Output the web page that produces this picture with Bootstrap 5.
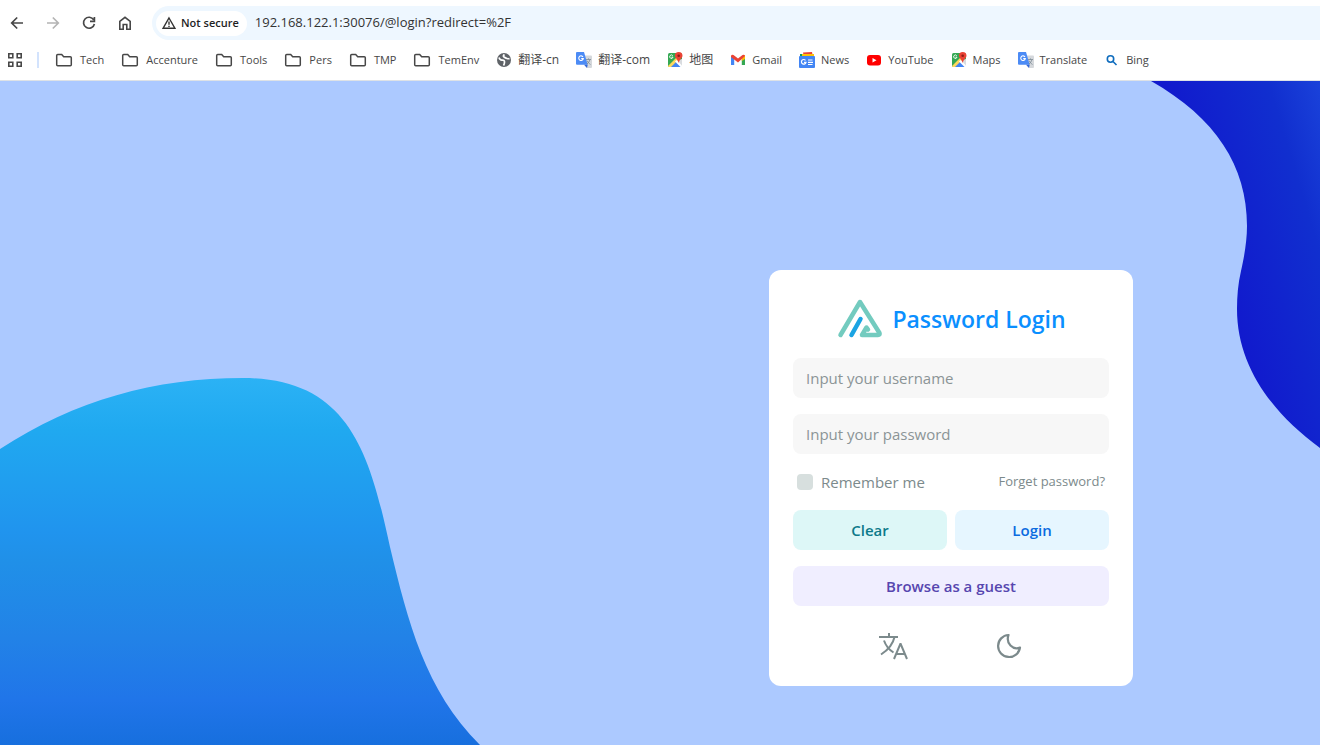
<!DOCTYPE html>
<html lang="en">
<head>
<meta charset="utf-8">
<meta name="viewport" content="width=device-width, initial-scale=1">
<title>Password Login</title>
<link rel="stylesheet" href="https://cdn.jsdelivr.net/npm/bootstrap@5.3.0/dist/css/bootstrap.min.css">
<style>
  body { font-family: "Open Sans", "Noto Sans CJK SC", sans-serif; background: #fff; }
  svg { display: block; flex: none; }
  button { color: inherit; }

  /* browser toolbar */
  .toolbar { height: 40px; padding: 6px 0 0 8px; gap: 18px; }
  .tool-btn { flex: none; width: 18px; height: 18px; padding: 0; border: 0; background: none; color: #474747; }
  .tool-btn:disabled { color: #b4b4b4; }
  .omnibox { height: 34px; padding-left: 4px; background: #eef7ff; border-radius: 17px 0 0 17px; }
  .secure-chip { height: 25px; padding: 0 8px 0 6px; gap: 5px; border: 0; border-radius: 13px; background: #fff; color: #1f1f1f; font-size: 11px; font-weight: 600; }
  .url-input { border: 0; background: none; outline: 0; color: #333; font-size: 13px; min-width: 0; }
  .bookmarks { height: 41px; padding-left: 7px; border-color: #dfe0e3; font-size: 11px; white-space: nowrap; overflow: hidden; }
  .bookmark-row { gap: 17px; }
  .bookmarks a { display: flex; align-items: center; gap: 6px; color: #474747; text-decoration: none; }
  .bookmarks a.folder-link { gap: 7px; }
  .bookmarks a:lang(zh) { font-size: 12px; }
  .divider { width: 2px; height: 16px; margin: 0 16px 0 14px; background: #d3e3fd; }

  /* login page */
  .page { background: #acc9ff; padding: 189px 187px 59px 24px; }
  .blob-left { left: 0; bottom: 0; }
  .blob-right { right: 0; top: 0; }
  .login-card { width: 364px; padding: 24px; border-radius: 12px; background: #fff; color: #7c8a8c; font-size: 15px; }
  .login-title { height: 48px; color: #0a8fff; font-size: 23px; font-weight: 600; }
  .field { height: 40px; padding: 0 13px; border: 0; border-radius: 8px; background: #f7f7f7; font-size: 15px; }
  .field::placeholder { color: #8b9496; }
  .tick { appearance: none; width: 16px; height: 16px; margin: 0; border-radius: 4px; background: #d7dfde; }
  .tick:checked { background: #0a8fff; }
  .options { height: 24px; }
  .forgot { color: #7c8a8c; font-size: 13px; text-decoration: none; }
  .action { height: 40px; border: 0; border-radius: 8px; font-size: 15px; font-weight: 600; }
  .action-clear { background: #ddf7f7; color: #0d7a8a; }
  .action-login { background: #e6f6ff; color: #0b6be0; }
  .action-guest { background: #f0eeff; color: #5746af; }
  .round-btn { border: 0; background: none; padding: 0; }
</style>
</head>
<body class="d-flex flex-column min-vh-100">

<svg width="0" height="0" class="position-absolute" aria-hidden="true">
  <symbol id="folder" viewBox="0 0 18 16"><path d="M2.700 2.500h4l2 2.200h6.600q1 0 1 1v7.100q0 1-1 1H2.700q-1 0-1-1V3.500q0-1 1-1z" fill="none" stroke="#474747" stroke-width="1.500"/></symbol>
  <symbol id="translate" viewBox="0 0 16 16">
    <path d="M6 3.500h9q1 0 1 1V15q0 1-1 1h-4z" fill="#d5d8dc"/>
    <path d="M1 0h7l3.700 12.700H1q-1 0-1-1V1q0-1 1-1z" fill="#4c8bf5"/>
    <path d="M8 12.700h3.700L11 16z" fill="#3367d6"/>
    <path d="M7 4.900A2.300 2.300 0 1 0 7.300 6.600H5.200" fill="none" stroke="#fff" stroke-width="1.100"/>
    <path d="M10 7.500h5M12.500 6.400v1.100M14 7.700q-1 3-3 4.300M11.200 8.800q1 2.500 3.300 3.700" fill="none" stroke="#7b8a94" stroke-width=".8"/>
  </symbol>
  <symbol id="maps" viewBox="0 0 16 16">
    <rect x="1" y="1" width="14" height="14" rx="1.500" fill="#34a853"/>
    <path d="M15 7v8L8.500 8.500z" fill="#d9dce0"/><path d="M3 15 9 9l6 6z" fill="#4285f4"/>
    <path d="M1 14 13 2l2 2L4 15H2q-1 0-1-1z" fill="#fdd85d"/><path d="M8 9.500 9.500 8l5.500 5.500V15h-1.500z" fill="#fff"/>
    <path d="M5.800 3.800A1.700 1.700 0 1 0 6 5.200H4.500" fill="none" stroke="#fff" stroke-width=".9"/>
    <path d="M11.700 0a3.800 3.800 0 0 1 3.800 3.800c0 2.400-3 3.500-3.800 7.200-.8-3.700-3.800-4.800-3.800-7.200A3.800 3.800 0 0 1 11.700 0z" fill="#ea4335"/><circle cx="11.700" cy="3.800" r="1.300" fill="#8c1f16"/>
  </symbol>
</svg>

<header class="bg-white">
  <div class="toolbar d-flex align-items-center">
    <button class="tool-btn" aria-label="Back"><svg width="18" height="18" fill="none" stroke="currentColor" stroke-width="1.700"><path d="M15 9H4M9.200 3.500 3.700 9l5.500 5.500"/></svg></button>
    <button class="tool-btn" aria-label="Forward" disabled><svg width="18" height="18" fill="none" stroke="currentColor" stroke-width="1.700"><path d="M3 9h11M8.800 3.500 14.300 9l-5.500 5.500"/></svg></button>
    <button class="tool-btn" aria-label="Reload"><svg width="18" height="18" fill="none" stroke="currentColor" stroke-width="1.700"><path d="M13.700 5.800A5.500 5.500 0 1 0 14.400 10M14.400 3v4.400H10"/></svg></button>
    <button class="tool-btn" aria-label="Home"><svg width="18" height="18" fill="none" stroke="currentColor" stroke-width="1.600"><path d="M3.800 7.300 9 3.300l5.200 4v8h-3.400v-4.800H7.200v4.800H3.800z"/></svg></button>
    <div class="omnibox d-flex align-items-center flex-grow-1">
      <button class="secure-chip d-flex align-items-center flex-shrink-0"><svg width="14" height="14" fill="none" stroke="#333" stroke-width="1.400"><path d="M7 2 13 12.300H1zM7 5.500v3.200M7 9.800v1.300"/></svg>Not secure</button>
      <input class="url-input flex-grow-1 ms-2 p-0" aria-label="Address" value="192.168.122.1:30076/@login?redirect=%2F">
    </div>
  </div>
  <nav class="bookmarks d-flex align-items-center border-bottom" aria-label="Bookmarks">
    <button class="round-btn" aria-label="Apps"><svg width="16" height="16" fill="none" stroke="#474747" stroke-width="1.600"><path d="M1.800 1.800h4v4h-4zM10.200 1.800h4v4h-4zM1.800 10.200h4v4h-4zM10.200 10.200h4v4h-4z"/></svg></button>
    <span class="divider flex-shrink-0"></span>
    <div class="bookmark-row d-flex align-items-center">
      <a href="#" class="folder-link"><svg width="18" height="16"><use href="#folder"/></svg>Tech</a>
      <a href="#" class="folder-link"><svg width="18" height="16"><use href="#folder"/></svg>Accenture</a>
      <a href="#" class="folder-link"><svg width="18" height="16"><use href="#folder"/></svg>Tools</a>
      <a href="#" class="folder-link"><svg width="18" height="16"><use href="#folder"/></svg>Pers</a>
      <a href="#" class="folder-link"><svg width="18" height="16"><use href="#folder"/></svg>TMP</a>
      <a href="#" class="folder-link"><svg width="18" height="16"><use href="#folder"/></svg>TemEnv</a>
      <a href="#" lang="zh"><svg width="16" height="16"><circle cx="8" cy="8" r="7" fill="#5f6368"/><path d="M3 5.500q1 3 3.500 2.500 2 0 2 2t-1 3.500M8.500 2.500q-2 1.500-.5 2.500t3 1.500 2.500 0" fill="none" stroke="#fff" stroke-width="1.700"/></svg>翻译-cn</a>
      <a href="#" lang="zh"><svg width="16" height="16"><use href="#translate"/></svg>翻译-com</a>
      <a href="#" lang="zh"><svg width="16" height="16"><use href="#maps"/></svg>地图</a>
      <a href="#"><svg width="16" height="16"><path d="M1 4v9h3.200V6z" fill="#4285f4"/><path d="M15 4v9h-3.200V6z" fill="#34a853"/><path d="M11.800 4.500 15 3v4l-3.200 2z" fill="#fbbc04"/><path d="M1 4q.5-2 2.500-1L8 6.400 12.500 3q2-1 2.500 1L8 10.500 1 5z" fill="#ea4335"/></svg>Gmail</a>
      <a href="#"><svg width="16" height="16"><path d="M1 2h9v4H1z" fill="#0c9d58"/><path d="m4 .500 9-.5 1 5H5z" fill="#ea4335"/><path d="M3 2h12v4H3z" fill="#ffc107"/><rect y="4" width="16" height="12" rx="1" fill="#4285f4"/><path d="M6.500 8.300A2.300 2.300 0 1 0 7 10.300H5M9 8h4.500M9 10.300h5M9 12.500h4.500" fill="none" stroke="#fff" stroke-width="1.200"/></svg>News</a>
      <a href="#"><svg width="16" height="16"><rect x="1" y="3" width="14" height="10.500" rx="3" fill="#f00"/><path d="m6.500 6 4 2.250-4 2.250z" fill="#fff"/></svg>YouTube</a>
      <a href="#"><svg width="16" height="16"><use href="#maps"/></svg>Maps</a>
      <a href="#"><svg width="16" height="16"><use href="#translate"/></svg>Translate</a>
      <a href="#"><svg width="16" height="16" fill="none" stroke="#0f6cbd" stroke-width="1.600"><circle cx="6.500" cy="7" r="3.200"/><path d="m9 9.500 3.500 3.500"/></svg>Bing</a>
    </div>
  </nav>
</header>

<main class="page position-relative flex-grow-1 d-flex justify-content-end align-items-start overflow-hidden">
  <svg class="blob-left position-absolute" width="480" height="367" aria-hidden="true">
    <defs><linearGradient id="sea" x2="0" y2="1"><stop stop-color="#2bb2f5"/><stop offset=".14" stop-color="#20a9f0"/><stop offset=".42" stop-color="#2094ee"/><stop offset=".5" stop-color="#2090e8"/><stop offset=".71" stop-color="#2282e7"/><stop offset=".88" stop-color="#2075e9"/><stop offset="1" stop-color="#176fde"/></linearGradient></defs>
    <path d="M0 71C75 22 155 0 243 0c107 0 127 77 147 169 18 75 35 143 90 198H0z" fill="url(#sea)"/>
  </svg>
  <svg class="blob-right position-absolute" width="169" height="367" aria-hidden="true">
    <defs><linearGradient id="deep" gradientUnits="userSpaceOnUse" x1="100" y1="290" x2="243" y2="247"><stop stop-color="#111acd"/><stop offset=".67" stop-color="#112fcf"/><stop offset="1" stop-color="#1a42da"/></linearGradient></defs>
    <path d="M0 0C65 37 96 85 96 145c0 15-3 32-6 45-3 13-4 25-4 38 0 57 35 104 83 139V0z" fill="url(#deep)"/>
  </svg>

  <form class="login-card position-relative d-flex flex-column gap-3" onsubmit="return false">
    <h1 class="login-title d-flex align-items-center justify-content-center m-0">
      <svg class="me-2" width="48" height="48" fill="none" stroke-width="4.500" stroke-linecap="round" stroke-linejoin="round"><path d="M4.500 41 24 8l19.500 31q.8 2-1.500 2H26l4.500-7.500 1.500 2" stroke="#73cbbf"/><path d="m15.500 41 9-16" stroke="#1ba4e3"/></svg>
      <span class="pt-1">Password Login</span>
    </h1>
    <input class="field form-control" type="text" aria-label="Username" placeholder="Input your username">
    <input class="field form-control" type="password" aria-label="Password" placeholder="Input your password">
    <div class="options d-flex align-items-center justify-content-between px-1">
      <label class="d-flex align-items-center gap-2"><input class="tick" type="checkbox">Remember me</label>
      <a class="forgot" href="#">Forget password?</a>
    </div>
    <div class="d-flex gap-2">
      <button type="button" class="action action-clear flex-fill w-50">Clear</button>
      <button type="submit" class="action action-login flex-fill w-50">Login</button>
    </div>
    <button type="button" class="action action-guest w-100">Browse as a guest</button>
    <div class="d-flex justify-content-evenly mt-2">
      <button type="button" class="round-btn" aria-label="Language"><svg width="32" height="32" fill="none" stroke="currentColor" stroke-width="2"><path d="M2 7h19M12 3v4M17.500 7C16 14 11 20 4 24.500M7 10.500q2.500 7.500 9.500 12M17 29l6.300-15h.4L30 29M19 24h9"/></svg></button>
      <button type="button" class="round-btn" aria-label="Dark mode"><svg width="32" height="32" fill="none" stroke="currentColor" stroke-width="2.200" stroke-linejoin="round"><path d="M15.500 5A11 11 0 1 0 27 17.500C20 20.500 12.500 13.500 15.500 5z"/></svg></button>
    </div>
  </form>
</main>

<script src="https://cdn.jsdelivr.net/npm/bootstrap@5.3.0/dist/js/bootstrap.bundle.min.js"></script>
</body>
</html>
